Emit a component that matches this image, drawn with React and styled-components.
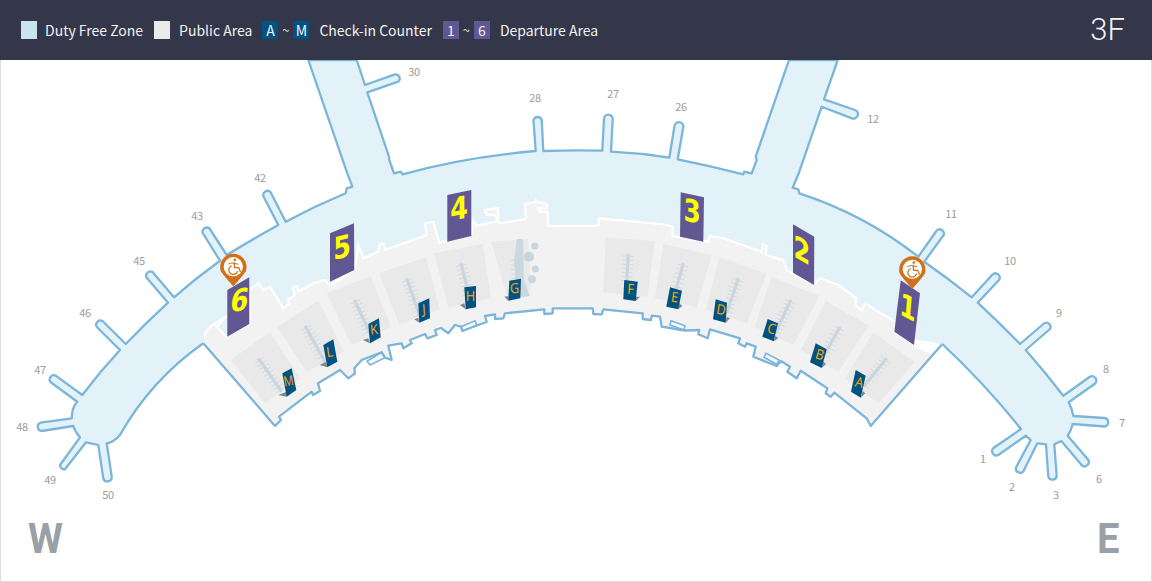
import React from 'react';
import styled, { createGlobalStyle } from 'styled-components';

const Global = createGlobalStyle`
  html, body { margin: 0; padding: 0; background: #fff; }
  #root { width: 1152px; height: 582px; overflow: hidden; }
`;
const Page = styled.div`
  width: 1152px; height: 582px; display: flex; flex-direction: column;
  font-family: "Noto Sans CJK KR", "Noto Sans", sans-serif;
`;
const Header = styled.header`
  height: 60px; flex: none; background: #343649; display: flex; align-items: center;
  justify-content: space-between; padding: 0 27px 0 21px; color: #f2f2f2;
`;
const Legend = styled.div`display: flex; align-items: center;`;
const Swatch = styled.span`
  width: 16px; height: 18px; background: ${p => p.$color}; margin-right: ${p => p.$gap}px;
`;
const LegendText = styled.span`
  font-size: 14px; line-height: 18px; letter-spacing: 0; margin-left: ${p => p.$before || 0}px; margin-right: ${p => p.$gap}px; white-space: nowrap;
`;
const Chip = styled.span`
  width: 16px; height: 18px; background: ${p => p.$color}; color: #f4f4f4; font-size: 14px; line-height: 18px; text-align: center;
`;
const Tilde = styled.span`
  width: 15px; text-align: center; font-size: 13px; line-height: 18px; color: #d8d8d8;
`;
const FloorName = styled.div`
  font-family: Roboto, sans-serif; font-weight: 300; font-size: 31px; line-height: 60px; color: #f4f4f4;
`;
const MapPanel = styled.main`
  position: relative; flex: none; height: 522px; box-sizing: border-box;
  border: 1px solid #dcdcdc; border-top: 0; background: #fff; overflow: hidden;
`;
const MapSvg = styled.svg`display: block; width: 1150px; height: 521px;`;
const Compass = styled.span`
  position: absolute; top: 456px; left: ${p => p.$left}px; font-family: Roboto, sans-serif; font-weight: 700;
  font-size: 42px; line-height: 46px; color: #9aa0a5; transform: scaleX(0.95); transform-origin: left center;
`;
const GateLabel = styled.text`
  font-family: "Noto Sans CJK KR", "Noto Sans", sans-serif; font-size: 11px; fill: #9c9c9c; text-anchor: middle; letter-spacing: -0.3px;
`;
const SignNumber = styled.text`
  font-family: "DejaVu Sans", sans-serif; font-weight: 700; font-size: 31px; fill: #ffff00; text-anchor: middle;
`;
const CounterLetter = styled.text`
  font-family: "Noto Sans", sans-serif; font-size: 14px; fill: #f5a50f; text-anchor: middle;
`;

const STROKE = '#7bb6da';
const SKY = '#e3f2f8';

const concourse = `M203.3 343.3 Q151 380 120 435 Q114 442 106.7 443.3 L111.7 476.7 A4.3 4.3 0 0 1 103.3 478.3 L98.3 445 L86 442.3 L65 469.3 A4.3 4.3 0 0 1 60 465 L80 437.3 Q75 432 73.3 426 L41.7 431 A4.3 4.3 0 0 1 40.5 422.7 L71.7 418.3 Q72 414 72.7 410 Q74 405 77.3 401.7 L50.7 382.3 A4.3 4.3 0 0 1 55.7 375.6 L82.3 395 Q100 371.5 120 350 L97 327.3 A4.3 4.3 0 0 1 102.5 321 L125.7 344 Q146 323 168 302.7 L146.5 277.5 A4.3 4.3 0 0 1 152.5 272 L174 297.3 Q196 278 220 260.7 L202.7 233 A4.3 4.3 0 0 1 209.5 228.5 L226.7 255 Q252 239.5 278.3 225 L263.5 196.5 A4.3 4.3 0 0 1 270.5 192 L285.7 221.7 Q315 206 345.7 193.3 L346.7 188.3 L352.3 186.7 L347.3 173.3 L308.3 60 L356.7 60 L365 85 L395 74.3 A4.3 4.3 0 0 1 398.3 81.7 L367.3 92.3 L389 156.7 L389.3 160 L394 173.3 L400.7 171.7 L402.7 174.3 Q465 157 535.7 151 L533.5 120 A4.3 4.3 0 0 1 541.7 120 L543.3 151 Q573 150 602.3 150.7 L604 119 A4.3 4.3 0 0 1 612.7 119 L611 151.7 Q640 153 669.3 157.7 L674.5 126 A4.3 4.3 0 0 1 683.3 127 L677.7 159.3 Q711 166 743.3 174.3 L744.3 171.7 L751.7 173.3 L756.7 160 L755.7 156.7 L789 60 L837.7 60 L824 99.3 L855 110 A4.3 4.3 0 0 1 852 118.3 L821.7 106.7 L799.3 171.7 L792.7 187.7 L798.3 189.3 L799.3 193.3 Q865 214.6 918.3 256.7 L936.7 230.5 A4.3 4.3 0 0 1 943.7 235 L924.3 261.7 Q949 279 971.7 297.3 L992.5 274.5 A4.3 4.3 0 0 1 999 280 L977.7 302.7 Q999 322.5 1020 344 L1044.5 323 A4.3 4.3 0 0 1 1050 329 L1025.7 350 Q1045 372 1063.3 395.7 L1089.5 377 A4.3 4.3 0 0 1 1094.5 384 L1068.7 402.3 Q1072 408 1073.3 416 L1104.5 418 A4.3 4.3 0 0 1 1104.5 426.5 L1072.7 424 Q1071 431 1067.7 435.7 L1088 459.5 A4.3 4.3 0 0 1 1082 465.5 L1061.3 441 L1054.3 444.3 L1056.7 476 A4.3 4.3 0 0 1 1048.3 476.5 L1046 444.3 L1037.3 443.3 L1023.3 471.5 A4.3 4.3 0 0 1 1016 467.5 L1030.7 440 L1025.7 435.7 L998.3 455 A4.3 4.3 0 0 1 993.5 448 L1021 429 Q985 384 942.3 344`;
const concourseFill = `${concourse} L860 330 L570 260 L280 330 Z`;

const topEdge = [[204,335],[210,327],[226.7,316],[216.7,326.7],[226.7,336.7],[250,323.3],[249.3,290],[258.3,283.3],[263.3,290],[270,287],[283.3,308.3],[289.3,303.3],[287.3,300],[295,295],[292.7,288.3],[296.7,286],[299,291],[313.3,283.3],[325,280],[330,285],[354.3,270],[358.3,245],[363.3,258.3],[378.3,251.7],[380,243.3],[384,244],[385,250],[426.7,235],[425,223.3],[433.3,221.7],[439.3,242.7],[471.7,233.3],[472.7,220],[476.7,225.7],[488.3,223.3],[494,221.7],[498,221.5],[498.3,208.3],[485,210],[486.7,215],[494,214.3],[500,223.3],[526,219],[525,204],[535,202.3],[535.7,200],[537.3,202],[546.7,204],[546.7,208.3],[538.3,208.3],[539.3,211.7],[547.3,211.7],[548.3,226],[598.3,225.7],[599.3,218.3],[660,224],[667.3,225],[672.7,226.7],[672.7,236],[703.3,241],[708.3,241.7],[710,235.7],[723.3,238.3],[761.7,251.7],[763.3,244],[766.7,246],[765.7,255],[783.3,260],[786.7,270],[814,285],[820,278.3],[838.3,285],[856.7,298.3],[855,305],[861.7,310],[865,303.3],[895,321.7],[894.3,331.7],[914,345],[931.7,352.7]];
const bottomEdge = [[203.3,343.3],[275,426],[281,420],[279,416.7],[311.7,391.7],[313,395],[320,391],[318,383.3],[340,370],[348.3,378.3],[355,373.3],[354.3,368.3],[361.7,360],[381.7,352.3],[385,357.7],[391.7,360],[388.3,345.7],[401.7,343.3],[403.3,348.3],[411.7,343.3],[410,340],[425,334],[427.3,338.3],[436.7,335],[435,330],[441,328],[448.3,333.3],[455,325],[461,326.7],[462.3,331],[476.7,325.5],[486.7,322],[485,316],[495,314.3],[495,319],[503.3,318.3],[505,313.3],[544.3,309.3],[544.3,314],[552.7,313.3],[552.7,308.3],[592.7,308.3],[593.3,314],[601.7,314.3],[603.3,309.3],[642.7,313.3],[642.7,319],[651,320],[651.7,315.7],[660,316.7],[661.7,326.7],[670,328],[685,330.5],[699.3,330],[698.3,334.3],[707.7,338.3],[710,329.3],[740,338.3],[738.3,343.3],[745,346.7],[746.7,343.3],[755.7,346.7],[753.3,356.7],[776.7,366],[781,361],[790,366.7],[787.3,371.7],[796.7,378.3],[800.7,370.7],[827.3,388.3],[825.7,393.3],[830.7,396.7],[834.3,392.7],[866.7,418.3],[870.7,426],[942.3,344]];
const pts = a => a.map(p => p.join(',')).join(' ');
const publicArea = pts([...bottomEdge, ...[...topEdge].reverse()]);

const closets = [
  [[367,361.3],[381.7,352.3],[385,357.7],[370,365]],
  [[461,326.7],[475,320.7],[476.7,325.5],[462.3,331]],
  [[671,320.7],[685,325.7],[684,330],[670,325]],
  [[766,353.3],[779,360],[776.7,364.3],[764,357.3]],
];

const islands = [
  [[230.7,360],[270,332.3],[300,378.3],[265,403.3]],
  [[277.3,326.7],[318.3,301],[344,351.7],[306.7,371.7]],
  [[326.7,293.3],[370.7,276],[390.7,326.7],[351.7,345]],
  [[379.3,273.3],[426,257.3],[440,310],[399,324]],
  [[434,253.3],[482.7,244],[491,298.3],[448.3,307.3]],
  [[491,241.7],[528,239],[531,290],[506.7,295]],
  [[605.7,237.7],[655,241],[647.3,296.7],[603.3,292.3]],
  [[663.3,244],[711.7,255],[696.7,307.3],[655,298.3]],
  [[719.3,257.3],[766.7,273.3],[746.7,323.3],[705.7,310]],
  [[771.7,276.7],[819.3,296],[793.3,345],[754.3,326.7]],
  [[826,301],[868.7,325.7],[838.3,371.7],[801,350]],
  [[873.3,332.3],[915,361.7],[878.3,403.3],[845,378.3]],
];

const ladders = [
  [258.3,358.3,281.7,391.7],[305,326,325,361.7],[354.3,300,370,333.3],[406.7,278.3,420,316.7],[461,263.3,470,300],
  [516,258,517.5,285],
  [628.3,254,626.7,283],[683.3,263.3,675,293.3],[738.3,278.3,726.7,313.3],[791,300,775,333.3],[840,326.7,823.3,356.7],[886.7,358.3,863.3,386.7],
];

function Ladder({ line: [x1, y1, x2, y2] }) {
  const dx = x2 - x1, dy = y2 - y1, len = Math.hypot(dx, dy);
  const nx = -dy / len, ny = dx / len;
  const count = Math.floor(len / 4);
  const ticks = Array.from({ length: count }, (_, i) => {
    const t = (i + 0.5) / count;
    const x = x1 + dx * t, y = y1 + dy * t;
    return `M${(x - nx * 5.5).toFixed(1)} ${(y - ny * 5.5).toFixed(1)}L${(x + nx * 5.5).toFixed(1)} ${(y + ny * 5.5).toFixed(1)}`;
  }).join('');
  return (
    <g>
      <path d={ticks} stroke="#d3dadf" strokeWidth="1" fill="none" />
      <line x1={x1} y1={y1} x2={x2} y2={y2} stroke="#c9d6de" strokeWidth="3.2" />
    </g>
  );
}

const counters = [
  { l: 'M', p: [[282.3,373.3],[291.7,368.3],[296.3,390],[286.7,396.7]], s: [[278.3,395],[286.7,391.7],[286.7,396.7]], r: -10 },
  { l: 'L', p: [[323.3,345],[333.3,339.3],[337.3,361.7],[327.3,367.3]], s: [[319.5,365],[326,361.7],[327.3,367.3]], r: -8 },
  { l: 'K', p: [[368.3,324],[379,318.3],[380.7,337.3],[370,343.3]], s: [[362.7,340],[368.3,338.3],[370,343.3]], r: -6 },
  { l: 'J', p: [[418.3,303.3],[429.3,298.3],[430,318.3],[419.3,322.7]], s: [[414.3,319.3],[418.3,317.7],[419.3,322.7]], r: -4 },
  { l: 'H', p: [[464.3,287.3],[476,286],[476,307.3],[465.7,309.3]], s: [[460,305],[464.3,303.3],[465.7,309.3]], r: 0 },
  { l: 'G', p: [[509.3,280.7],[521,278.7],[520.3,298.3],[508.3,300.7]], s: [[504.3,296.7],[508.5,296],[508.3,300.7]], r: -2 },
  { l: 'F', p: [[624.3,280],[637.7,281.7],[635.7,301],[623.3,299.3]], s: [[635.7,301],[640,296.7],[636,296.7]], r: 3 },
  { l: 'E', p: [[670,287.3],[682,290.7],[678.3,309.3],[666.3,306.7]], s: [[678.3,309.3],[682.3,306],[679.3,303.3]], r: 8 },
  { l: 'D', p: [[715.7,299.3],[727,302.7],[725.7,322.7],[713,319.3]], s: [[725.7,322.7],[730,318.3],[726.7,316.7]], r: 9 },
  { l: 'C', p: [[767.7,319],[778,323.3],[773.7,341.3],[762.3,336.7]], s: [[773.7,341.3],[778.3,338.3],[775.3,335.7]], r: 14 },
  { l: 'B', p: [[815.7,343.3],[826.7,349.3],[821.7,368],[810,362.3]], s: [[821.7,368],[826,364],[823.3,361.7]], r: 15 },
  { l: 'A', p: [[855.7,370],[865.7,375.7],[860.7,397.7],[851,391.7]], s: [[860.7,397.7],[865.3,393.3],[862.7,391]], r: 13 },
];
const centre = p => [(p[0][0] + p[1][0] + p[2][0] + p[3][0]) / 4, (p[0][1] + p[1][1] + p[2][1] + p[3][1]) / 4];

const departures = [
  { n: '6', p: [[227.3,290],[249.3,277.3],[249.3,324],[227.3,336.7]], t: 'translate(238 311) scale(0.82 1) skewX(-10) skewY(-8)' },
  { n: '5', p: [[330,233.3],[354,223.3],[354.3,270],[330,281.7]], t: 'translate(342 258) scale(0.82 1) skewY(-12)' },
  { n: '4', p: [[447.3,195],[471.3,190],[471.3,236],[447.3,241.7]], t: 'translate(459 219) scale(0.82 1) skewY(-8)' },
  { n: '3', p: [[680.7,192.3],[704,197.3],[703.3,241.7],[680,236.7]], t: 'translate(692 222) scale(0.8 1) skewY(9)' },
  { n: '2', p: [[793,224.3],[814.3,236.7],[814,285],[793,272.7]], t: 'translate(802 261) scale(0.78 1) skewY(24)' },
  { n: '1', p: [[900.7,280.3],[920,293.3],[914,345],[894.3,331.7]], t: 'translate(907 318) scale(0.78 1) skewX(-6) skewY(22)' },
];

const gates = [
  ['30',414,76],['28',535,102],['27',613,98],['26',681,111],['12',873,123],['42',260,182],['43',197,220],['45',139,265],['46',85,317],['47',40,374],['48',22,431],['49',50,484],['50',108,499],
  ['11',951,218],['10',1010,265],['9',1059,317],['8',1106,373],['7',1122,427],['1',983,463],['2',1012,491],['3',1056,499],['6',1099,483],
];

function Pin({ x, y }) {
  return (
    <g transform={`translate(${x} ${y})`}>
      <path d="M-12.5 4.5 A13.2 13.2 0 1 1 12.5 4.5 Q8 11 0 19.5 Q-8 11 -12.5 4.5 Z" fill="#d2701a" />
      <circle r="9.6" fill="#fff" />
      <g stroke="#d2701a" fill="none" strokeWidth="1.3">
        <circle cx="1.5" cy="-6.8" r="1.1" fill="#d2701a" strokeWidth="0.6" />
        <path d="M1 -4.5 L1.2 1 L5.5 1 L7.2 5.4" />
        <path d="M-5 -2.6 L-1.6 -3.8 L5 -2.5" strokeWidth="1" />
        <path d="M-1.6 -0.8 A4.4 4.4 0 1 0 4.2 4.4" />
      </g>
    </g>
  );
}

function MapDrawing() {
  return (
    <MapSvg viewBox="1 60 1150 521">
      <path d={concourseFill} fill={SKY} />
      <path d={concourse} fill="none" stroke={STROKE} strokeWidth="2.3" strokeLinejoin="round" />
      <polygon points={publicArea} fill="#f2f2f2" />
      {closets.map((c, i) => <polygon key={i} points={pts(c)} fill="#f6fafc" stroke={STROKE} strokeWidth="1.6" />)}
      <polyline points={pts(topEdge)} fill="none" stroke="#fff" strokeWidth="2.2" />
      <polyline points={pts(bottomEdge)} fill="none" stroke={STROKE} strokeWidth="2.3" strokeLinejoin="round" />
      {islands.map((c, i) => <polygon key={i} points={pts(c)} fill="#e9e9e9" />)}
      {ladders.map((l, i) => <Ladder key={i} line={l} />)}
      <path d="M516.7 239 L523 239 L524 280 L530 296 L518 298 L514 262 Z" fill="#ccd8df" />
      <g fill="#c9d6de">
        <circle cx="534.7" cy="246" r="3.6" />
        <circle cx="529" cy="256.7" r="5" />
        <circle cx="535.3" cy="269" r="3.6" />
        <circle cx="532" cy="279.3" r="4" />
      </g>
      {counters.map(c => {
        const [x, y] = centre(c.p);
        return (
          <g key={c.l}>
            <polygon points={pts(c.s)} fill="#7d8590" />
            <polygon points={pts(c.p)} fill="#005380" />
            <CounterLetter transform={`translate(${x} ${y + 3.5}) rotate(${c.r}) scale(${c.l === 'M' ? 0.78 : 0.92} 1)`}>{c.l}</CounterLetter>
          </g>
        );
      })}
      {departures.map(d => (
        <g key={d.n}>
          <polygon points={pts(d.p)} fill="#615793" />
          <SignNumber transform={d.t}>{d.n}</SignNumber>
        </g>
      ))}
      <Pin x={233.3} y={266.7} />
      <Pin x={912.3} y={269.3} />
      {gates.map(([n, x, y]) => <GateLabel key={x + n} x={x} y={y}>{n}</GateLabel>)}
    </MapSvg>
  );
}

export default function App() {
  return (
    <Page>
      <Global />
      <Header>
        <Legend>
          <Swatch $color="#c9e3ef" $gap={8} />
          <LegendText $gap={11}>Duty Free Zone</LegendText>
          <Swatch $color="#ebebeb" $gap={9} />
          <LegendText $gap={10}>Public Area</LegendText>
          <Chip $color="#005380">A</Chip>
          <Tilde>~</Tilde>
          <Chip $color="#005380">M</Chip>
          <LegendText $before={10} $gap={11}>Check-in Counter</LegendText>
          <Chip $color="#615793">1</Chip>
          <Tilde>~</Tilde>
          <Chip $color="#615793">6</Chip>
          <LegendText $before={10} $gap={0}>Departure Area</LegendText>
        </Legend>
        <FloorName>3F</FloorName>
      </Header>
      <MapPanel>
        <MapDrawing />
        <Compass $left={27}>W</Compass>
        <Compass $left={1096}>E</Compass>
      </MapPanel>
    </Page>
  );
}
